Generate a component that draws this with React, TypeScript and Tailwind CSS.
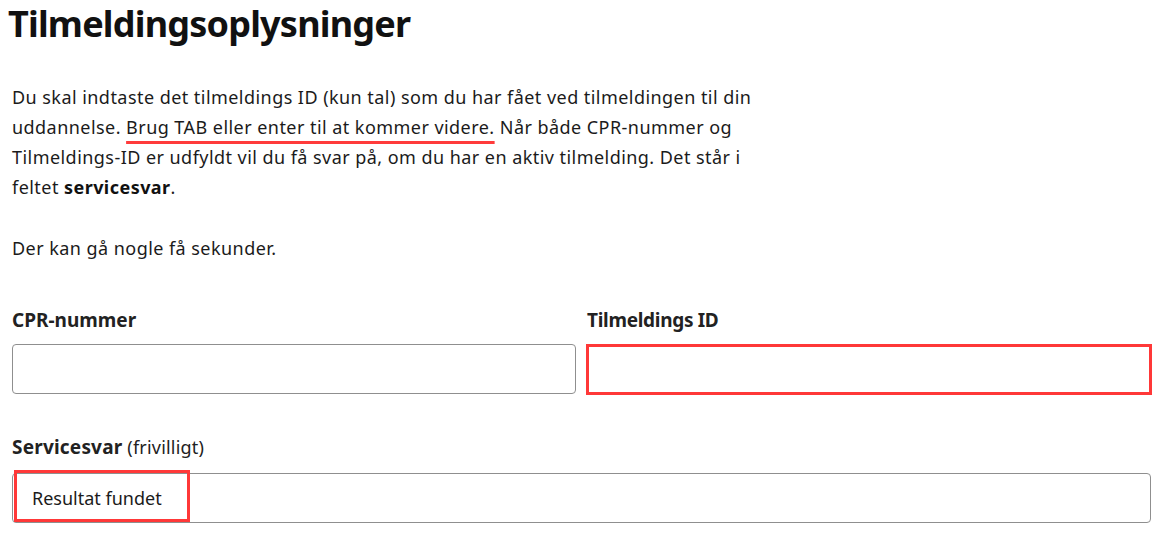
import React from "react";

export default function App() {
  return (
    <div
      className="min-h-screen bg-white pl-[12px] pr-[11px] text-[#1b1b1b]"
      style={{ fontFamily: '"Noto Sans", "Open Sans", Arial, sans-serif' }}
    >
      <h1 className="-ml-[4px] pt-[2px] text-[36px] font-bold leading-[44px] tracking-[-0.8px] text-[#111]">
        Tilmeldingsoplysninger
      </h1>

      <div className="mt-[36px] max-w-[770px] text-[18px] leading-[30px] tracking-[0.45px]">
        <p>
          Du skal indtaste det tilmeldings ID (kun tal) som du har fået ved tilmeldingen til din uddannelse.{" "}
          <span className="underline decoration-[#ff3b3b] decoration-[3px] underline-offset-[7px]">
            Brug TAB eller enter til at kommer videre.
          </span>{" "}
          Når både CPR-nummer og Tilmeldings-ID er udfyldt vil du få svar på, om du har en aktiv tilmelding. Det står i
          feltet <strong className="font-bold text-[#111]">servicesvar</strong>.
        </p>
        <p className="mt-[31px]">Der kan gå nogle få sekunder.</p>
      </div>

      <div className="mt-[45px] grid grid-cols-2 gap-[11px]">
        <div className="flex flex-col">
          <label className="text-[19px] font-bold leading-[24px] text-[#222]">CPR-nummer</label>
          <input
            type="text"
            className="mt-[12px] h-[50px] rounded-[4px] border border-[#8f8f8f] bg-white px-[18px] text-[18px] outline-none"
          />
        </div>
        <div className="flex flex-col">
          <label className="text-[19px] font-bold leading-[24px] tracking-[-0.3px] text-[#222]">Tilmeldings ID</label>
          <div className="relative mt-[12px]">
            <input
              type="text"
              className="h-[50px] w-full rounded-[4px] border border-[#8f8f8f] bg-white px-[18px] text-[18px] outline-none"
            />
            <div className="pointer-events-none absolute -left-[1px] -top-[0px] -right-[1px] -bottom-[1px] border-[3px] border-[#ff3838]" />
          </div>
        </div>
      </div>

      <div className="mt-[41px] flex flex-col">
        <label className="text-[18px] leading-[24px] tracking-[0.2px] text-[#222]">
          <span className="text-[19px] font-bold">Servicesvar</span> (frivilligt)
        </label>
        <div className="relative mt-[14px]">
          <input
            type="text"
            readOnly
            value="Resultat fundet"
            className="h-[50px] w-full rounded-[4px] border border-[#8f8f8f] bg-white px-[19px] text-[18px] text-[#1b1b1b] outline-none"
          />
          <div className="pointer-events-none absolute left-[2px] -top-[3px] h-[52px] w-[176px] border-[3px] border-[#ff3838]" />
        </div>
      </div>
    </div>
  );
}
